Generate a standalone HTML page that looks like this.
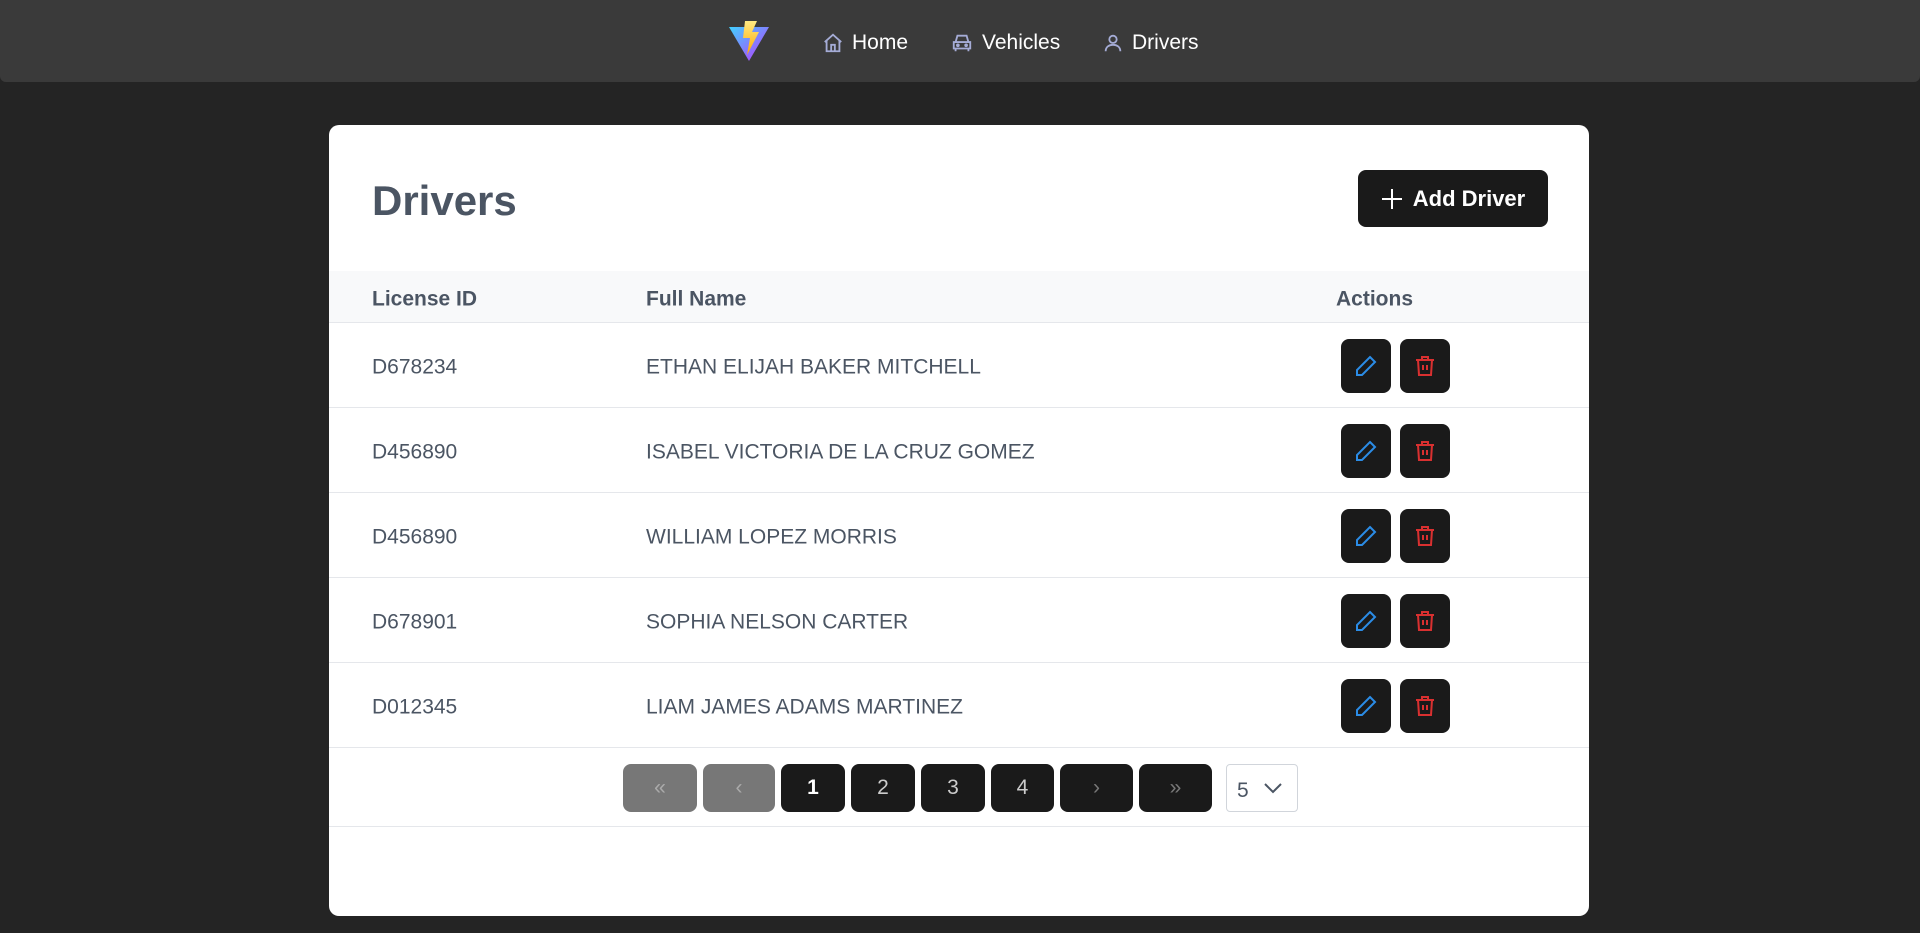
<!DOCTYPE html>
<html><head><style>
*{box-sizing:border-box;margin:0;padding:0}
body{width:1920px;height:933px;background:#242424;font-family:"Liberation Sans",sans-serif;position:relative;overflow:hidden}
.nav{position:absolute;left:0;top:0;width:1920px;height:82px;background:#3a3a3a;border-radius:0 0 6px 6px}
.ni{position:absolute;top:31px;color:#fff;font-size:21px;display:flex;align-items:center;gap:8px}
.card{position:absolute;left:329px;top:125px;width:1260px;height:791px;background:#fff;border-radius:10px}
h1{position:absolute;left:43px;top:52px;font-size:42px;color:#4b5563;font-weight:bold}
.add{position:absolute;left:1029px;top:45px;width:190px;height:57px;background:#1a1a1a;border-radius:8px;color:#fff;font-weight:bold;font-size:22px;display:flex;align-items:center;justify-content:center;gap:10px}
.hdr{position:absolute;left:0;top:146px;width:1260px;height:52px;background:#f8f9fa;border-bottom:1px solid #e5e7eb;font-weight:bold;color:#4b5563;font-size:21px}
.row{position:absolute;left:0;width:1260px;height:85px;border-bottom:1px solid #e5e7eb;color:#4b5563;font-size:21px}
.c1{position:absolute;left:43px}.c2{position:absolute;left:317px}.c3{position:absolute;left:1007px}
.hdr span{top:50%;transform:translateY(-40%)}
.row>span{top:50%;transform:translateY(-40%)}
.ab{position:absolute;top:16px;width:50px;height:54px;background:#1a1a1a;border-radius:8px;display:flex;align-items:center;justify-content:center}
.pg{position:absolute;top:639px;height:48px;border-radius:8px;background:#1a1a1a;color:#ccc;font-size:21px;display:flex;align-items:center;justify-content:center}
.pg.d{background:#777;color:#aaa}
</style></head><body>
<div class="nav">
<svg style="position:absolute;left:728px;top:20px" width="42" height="42" viewBox="0 0 42 42"><defs><linearGradient id="g" x1="0" y1="0" x2="1" y2="1"><stop offset="0" stop-color="#41d1ff"/><stop offset="1" stop-color="#bd34fe"/></linearGradient><linearGradient id="y" x1="0" y1="0" x2="0" y2="1"><stop offset="0" stop-color="#ffea83"/><stop offset="1" stop-color="#ffa800"/></linearGradient></defs><path d="M1 7 L41 7 L21 41Z" fill="url(#g)"/><path d="M17 1 L29 1 L24 12 L31 12 L19 35 L22 18 L15 18Z" fill="url(#y)"/></svg>
<div class="ni" style="left:822px"><svg width="22" height="22" viewBox="0 0 24 24" fill="none" stroke="#a5acd6" stroke-width="2"><path d="M3 11 L12 3 L21 11 M5 9 V21 H19 V9 M10 21 V14 H14 V21"/></svg>Home</div>
<div class="ni" style="left:950px"><svg width="24" height="22" viewBox="0 0 24 24" fill="none" stroke="#a5acd6" stroke-width="2"><path d="M5 11 L7 4 H17 L19 11 M3 11 H21 V18 H3Z M5 18 V21 M19 18 V21"/><circle cx="7.5" cy="14.5" r="1"/><circle cx="16.5" cy="14.5" r="1"/></svg>Vehicles</div>
<div class="ni" style="left:1102px"><svg width="22" height="22" viewBox="0 0 24 24" fill="none" stroke="#a5acd6" stroke-width="2"><circle cx="12" cy="8" r="4"/><path d="M4 21 C4 16 8 14 12 14 C16 14 20 16 20 21"/></svg>Drivers</div>
</div>
<div class="card">
<h1>Drivers</h1>
<div class="add"><svg width="22" height="22" viewBox="0 0 22 22" stroke="#fff" stroke-width="2"><path d="M11 1V21M1 11H21"/></svg>Add Driver</div>
<div class="hdr"><span class="c1">License ID</span><span class="c2">Full Name</span><span class="c3">Actions</span></div>
<div class="row" style="top:198px"><span class="c1">D678234</span><span class="c2">ETHAN ELIJAH BAKER MITCHELL</span></div>
<div class="row" style="top:283px"><span class="c1">D456890</span><span class="c2">ISABEL VICTORIA DE LA CRUZ GOMEZ</span></div>
<div class="row" style="top:368px"><span class="c1">D456890</span><span class="c2">WILLIAM LOPEZ MORRIS</span></div>
<div class="row" style="top:453px"><span class="c1">D678901</span><span class="c2">SOPHIA NELSON CARTER</span></div>
<div class="row" style="top:538px"><span class="c1">D012345</span><span class="c2">LIAM JAMES ADAMS MARTINEZ</span></div>
<div style="position:absolute;left:0;top:701px;width:1260px;border-bottom:1px solid #e5e7eb"></div>
<div class="pg d" style="left:294px;width:74px">«</div>
<div class="pg d" style="left:374px;width:72px">‹</div>
<div class="pg" style="left:452px;width:64px;color:#fff;font-weight:bold">1</div>
<div class="pg" style="left:522px;width:64px">2</div>
<div class="pg" style="left:592px;width:64px">3</div>
<div class="pg" style="left:662px;width:63px">4</div>
<div class="pg" style="left:731px;width:73px;color:#777">›</div>
<div class="pg" style="left:810px;width:73px;color:#777">»</div>
<div style="position:absolute;left:897px;top:639px;width:72px;height:48px;border:1px solid #d1d5db;border-radius:4px;color:#4b5563;font-size:21px;display:flex;align-items:center;padding-left:10px;gap:14px"><span style="margin-top:6px">5</span><svg width="20" height="12" viewBox="0 0 20 12" fill="none" stroke="#4b5563" stroke-width="2"><path d="M2 2 L10 10 L18 2"/></svg></div>
</div>
<script>
document.querySelectorAll('.row').forEach(r=>{r.insertAdjacentHTML('beforeend','<div class="ab" style="left:1012px"><svg width="24" height="24" viewBox="0 0 24 24" fill="none" stroke="#2b8ce6" stroke-width="2"><path d="M16 3 L21 8 L8 21 L3 21 L3 16Z"/></svg></div><div class="ab" style="left:1071px"><svg width="24" height="24" viewBox="0 0 24 24" fill="none" stroke="#d93030" stroke-width="2"><path d="M3 6H21M9 6V3H15V6M5 6L6 21H18L19 6M10 11V16M14 11V16"/></svg></div>')});
</script>
</body></html>
